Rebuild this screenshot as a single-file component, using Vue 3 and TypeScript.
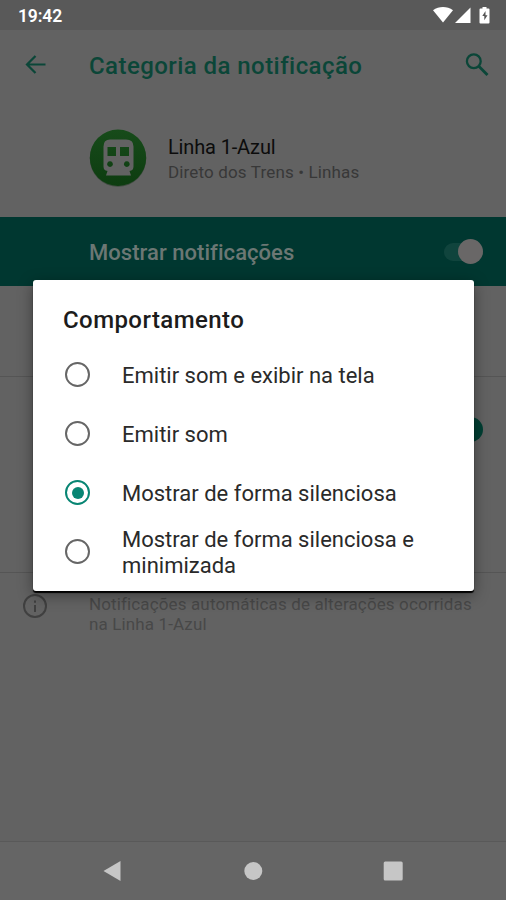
<script setup lang="ts">
import { ref } from 'vue'

const options: string[] = [
  'Emitir som e exibir na tela',
  'Emitir som',
  'Mostrar de forma silenciosa',
  'Mostrar de forma silenciosa e minimizada',
]
const selected = ref(2)
</script>

<template>
  <div class="screen">
    <div class="status">
      <span class="clock">19:42</span>
      <svg class="status-icons" width="58" height="20" viewBox="0 0 58 20" fill="#fff">
        <path d="M0 4.200C6-.2 14-.2 20 4.200L10 16.500z" />
        <path d="M37.500 1.500v15.500H22z" />
        <path d="M47.500 2.500h2V1h4v1.500h2q1 0 1 1v13q0 1-1 1h-8q-1 0-1-1v-13q0-1 1-1z" />
        <path d="M52.500 5l-3.200 5h2v4.200l3.200-5h-2z" fill="#555" />
      </svg>
    </div>

    <header class="toolbar">
      <svg class="back" width="22" height="20" viewBox="0 0 22 20" fill="none" stroke="#0b4638" stroke-width="2.200">
        <path d="M20.500 9.500H2M10.500 1L2 9.500l8.500 8.500" />
      </svg>
      <h1>Categoria da notificação</h1>
      <svg class="search" width="24" height="24" viewBox="0 0 24 24" fill="none" stroke="#0b4638" stroke-width="2.300">
        <circle cx="8.800" cy="8.300" r="6.900" />
        <path d="M13.800 13.300l8.700 8.700" stroke-width="2.800" />
      </svg>
    </header>

    <section class="app">
      <svg width="58" height="58" viewBox="0 0 58 58">
        <defs>
          <linearGradient id="disc" x1="0" y1="0" x2="0" y2="1">
            <stop offset="0" stop-color="#174b1a" />
            <stop offset="1" stop-color="#0d3c10" />
          </linearGradient>
        </defs>
        <circle cx="29" cy="29.600" r="28.200" fill="#404c41" />
        <circle cx="29" cy="28.800" r="28.200" fill="url(#disc)" />
        <path fill="#626262" fill-rule="evenodd" d="M21 10.500h16q7.500 0 7.500 7v20q0 4-4 4.500l1.500 4.500H17l1.500-4.500q-4-.5-4-4.500v-20q0-7 6.500-7zM18.500 18v9H27v-9zM31 18v9h9v-9zM21 32.200a2.900 2.900 0 1 0 .01 0zM37.800 32.200a2.900 2.900 0 1 0 .01 0z" />
      </svg>
      <div class="app-text">
        <div class="channel">Linha 1-Azul</div>
        <div class="source">Direto dos Trens • Linhas</div>
      </div>
    </section>

    <section class="band">
      <span>Mostrar notificações</span>
      <div class="switch"><i></i></div>
    </section>

    <section class="row first"></section>
    <section class="row second"><i class="thumb"></i></section>

    <section class="note">
      <svg width="26" height="26" viewBox="0 0 26 26" fill="none" stroke="#404040" stroke-width="2">
        <circle cx="13" cy="13" r="11" />
        <path d="M13 12v7M13 7.500v2.300" />
      </svg>
      <p>Notificações automáticas de alterações ocorridas<br>na Linha 1-Azul</p>
    </section>

    <nav class="nav">
      <svg width="20" height="22" viewBox="0 0 20 22"><path d="M1.500 11L18.500 1v20z" fill="#c6c6c6" /></svg>
      <svg width="20" height="20" viewBox="0 0 20 20"><circle cx="10.300" cy="10" r="9" fill="#c6c6c6" /></svg>
      <svg width="20" height="20" viewBox="0 0 20 20"><rect x=".7" y=".5" width="19" height="19" rx="1.500" fill="#c6c6c6" /></svg>
    </nav>

    <div class="dialog">
      <h2>Comportamento</h2>
      <div
        v-for="(option, i) in options"
        :key="option"
        class="option"
        :class="{ on: i === selected }"
        @click="selected = i"
      >
        <span class="radio"></span>
        <span class="label">{{ option }}</span>
      </div>
    </div>
  </div>
</template>

<style>
body {
  margin: 0;
}
</style>

<style scoped>
.screen {
  position: relative;
  display: flex;
  flex-direction: column;
  width: 506px;
  height: 900px;
  overflow: hidden;
  background: #626262;
  font-family: Roboto, sans-serif;
}
svg {
  display: block;
  flex: none;
}
.status {
  display: flex;
  justify-content: space-between;
  height: 30px;
  box-sizing: border-box;
  padding: 6px 15px 0 18px;
  background: #595959;
  color: #fff;
}
.clock {
  font-size: 17.5px;
  line-height: 20px;
  font-weight: 600;
  letter-spacing: -0.15px;
}
.toolbar {
  display: flex;
  align-items: center;
  height: 70px;
  padding: 0 17px 0 25px;
}
h1 {
  flex: 1;
  margin: 2px 0 0 42px;
  font-size: 24px;
  font-weight: 500;
  letter-spacing: 0.44px;
  color: #0b4638;
  white-space: nowrap;
}
.app {
  display: flex;
  align-items: center;
  height: 117px;
  padding-left: 89px;
  gap: 21px;
}
.app svg {
  margin-bottom: 1px;
}
.channel {
  font-size: 20px;
  line-height: 26px;
  letter-spacing: -0.15px;
  color: #0c0c0c;
}
.source {
  font-size: 17px;
  line-height: 24px;
  letter-spacing: 0.15px;
  color: #383838;
}
.band {
  display: flex;
  align-items: center;
  justify-content: space-between;
  box-sizing: border-box;
  height: 69px;
  padding: 0 23px 0 89px;
  background: #003730;
  color: #6c7774;
  font-size: 22px;
  font-weight: 500;
  letter-spacing: 0.05px;
}
.band span {
  padding-top: 2px;
}
.switch {
  display: flex;
  align-items: center;
  justify-content: flex-end;
  width: 39px;
  height: 18px;
  border-radius: 9px;
  background: #10443d;
}
.switch i {
  width: 25px;
  height: 25px;
  flex: none;
  border-radius: 50%;
  background: #696767;
}
.row {
  box-sizing: border-box;
  border-bottom: 1px solid #555;
}
.first {
  height: 91px;
}
.second {
  display: flex;
  justify-content: flex-end;
  height: 196px;
  padding: 40px 23px 0 0;
}
.thumb {
  width: 25px;
  height: 25px;
  border-radius: 50%;
  background: #003f33;
}
.note {
  display: flex;
  flex: 1;
  padding: 20px 0 0 22px;
  gap: 41px;
}
.note p {
  margin: 1px 0 0;
  font-size: 17px;
  line-height: 20px;
  letter-spacing: 0.13px;
  color: #484848;
  white-space: nowrap;
}
.nav {
  display: flex;
  align-items: center;
  justify-content: space-between;
  box-sizing: border-box;
  height: 59px;
  padding: 0 103px 0 102px;
  border-top: 1px solid #595959;
  background: #656565;
}
.dialog {
  position: absolute;
  left: 33px;
  top: 280px;
  box-sizing: border-box;
  width: 441px;
  height: 311px;
  padding: 22px 30px 0;
  border-radius: 3px;
  background: #fff;
  box-shadow: 0 2px 1px #000, 0 4px 15px rgba(0, 0, 0, 0.4);
}
h2 {
  margin: 0 0 7px;
  font-size: 24px;
  line-height: 36px;
  font-weight: 500;
  letter-spacing: 0.42px;
  color: #1c1c1c;
}
.option {
  display: flex;
  align-items: center;
  height: 59px;
  padding-left: 2px;
  gap: 32px;
}
.radio {
  display: flex;
  align-items: center;
  justify-content: center;
  flex: none;
  box-sizing: border-box;
  width: 25px;
  height: 25px;
  border: 2px solid #666;
  border-radius: 50%;
}
.on .radio {
  border-color: #078573;
}
.on .radio::after {
  content: '';
  width: 12px;
  height: 12px;
  border-radius: 50%;
  background: #078573;
}
.label {
  padding-top: 2px;
  font-size: 22px;
  line-height: 26px;
  color: #2a2a2a;
}
</style>
